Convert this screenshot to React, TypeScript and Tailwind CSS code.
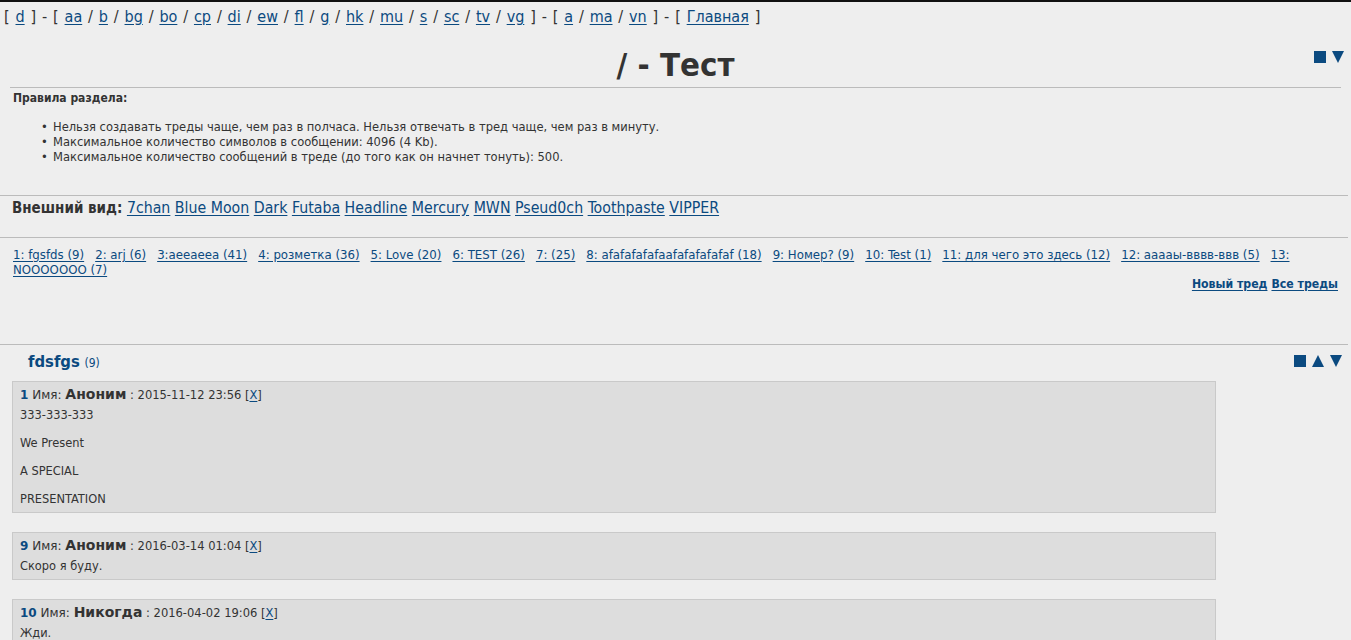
import React from 'react';

const boards1 = ['aa', 'b', 'bg', 'bo', 'cp', 'di', 'ew', 'fl', 'g', 'hk', 'mu', 's', 'sc', 'tv', 'vg'];
const boards2 = ['a', 'ma', 'vn'];
const styles = ['7chan', 'Blue Moon', 'Dark', 'Futaba', 'Headline', 'Mercury', 'MWN', 'Pseud0ch', 'Toothpaste', 'VIPPER'];
const threads = [
  '1: fgsfds (9)',
  '2: arj (6)',
  '3:aeeaeea (41)',
  '4: розметка (36)',
  '5: Love (20)',
  '6: TEST (26)',
  '7: (25)',
  '8: afafafafafaafafafafafaf (18)',
  '9: Номер? (9)',
  '10: Test (1)',
  '11: для чего это здесь (12)',
  '12: ааааы-вввв-ввв (5)',
  '13: NOOOOOOO (7)',
];
const rules = [
  'Нельзя создавать треды чаще, чем раз в полчаса. Нельзя отвечать в тред чаще, чем раз в минуту.',
  'Максимальное количество символов в сообщении: 4096 (4 Kb).',
  'Максимальное количество сообщений в треде (до того как он начнет тонуть): 500.',
];

interface Post {
  num: number;
  name: string;
  date: string;
  lines: string[];
}

const posts: Post[] = [
  { num: 1, name: 'Аноним', date: '2015-11-12 23:56', lines: ['333-333-333', 'We Present', 'A SPECIAL', 'PRESENTATION'] },
  { num: 9, name: 'Аноним', date: '2016-03-14 01:04', lines: ['Скоро я буду.'] },
  { num: 10, name: 'Никогда', date: '2016-04-02 19:06', lines: ['Жди.'] },
];

const link = 'text-[#0b4a80] underline underline-offset-2';

function Square() {
  return <span className="inline-block w-[12px] h-[12px] bg-[#0b4a80]" />;
}

function Down() {
  return (
    <svg width="12" height="12" viewBox="0 0 12 12">
      <polygon points="0,0 12,0 6,12" fill="#0b4a80" />
    </svg>
  );
}

function Up() {
  return (
    <svg width="12" height="12" viewBox="0 0 12 12">
      <polygon points="0,12 12,12 6,0" fill="#0b4a80" />
    </svg>
  );
}

export default function App() {
  return (
    <div className="min-h-[640px] bg-[#eeeeee] text-[#333] border-t-2 border-[#111] font-['DejaVu_Sans_Condensed','Liberation_Sans',sans-serif]">
      {/* top nav */}
      <div className="px-[4px] pt-[5px] text-[16px] leading-[20px] [word-spacing:1.3px] whitespace-nowrap">
        [ <a className={link}>d</a> ] - [{' '}
        {boards1.map((b, i) => (
          <React.Fragment key={b}>
            <a className={link}>{b}</a>
            {i < boards1.length - 1 ? ' / ' : ' '}
          </React.Fragment>
        ))}
        ] - [{' '}
        {boards2.map((b, i) => (
          <React.Fragment key={b}>
            <a className={link}>{b}</a>
            {i < boards2.length - 1 ? ' / ' : ' '}
          </React.Fragment>
        ))}
        ] - [ <a className={link}>Главная</a> ]
      </div>

      {/* board title */}
      <div className="relative mx-[10px] mt-[18px] pb-[2px] border-b border-[#bbb]">
        <h1 className="text-center text-[32.7px] leading-[40px] font-bold text-[#333]">/ - Тест</h1>
        <div className="absolute right-[-3px] top-[6px] flex items-center gap-[6px]">
          <Square />
          <Down />
        </div>
      </div>

      {/* rules */}
      <div className="mr-[3px] pl-[13px] pt-[3px] pb-[31px] leading-[15px] border-b border-[#bbb]">
        <div className="font-bold text-[12px]">Правила раздела:</div>
        <ul className="mt-[13px] pl-[28px] text-[12.8px]">
          {rules.map((r) => (
            <li key={r} className="flex">
              <span className="w-[12px] shrink-0">•</span>
              <span>{r}</span>
            </li>
          ))}
        </ul>
      </div>

      {/* styles */}
      <div className="mr-[3px] pl-[12px] pt-[2px] pb-[19px] leading-[20px] border-b border-[#bbb]">
        <span className="font-bold text-[15px]">Внешний вид:</span>{' '}
        <span className="text-[15.75px]">
          {styles.map((s) => (
            <React.Fragment key={s}>
              <a className={link}>{s}</a>{' '}
            </React.Fragment>
          ))}
        </span>
      </div>

      {/* thread list */}
      <div className="pl-[13px] pr-[13px] pt-[9px] leading-[15px]">
        <div className="text-[13.1px]">
          {threads.map((t) => (
            <a key={t} className={`${link} mr-[11px]`}>{t}</a>
          ))}
        </div>
        <div className="flex justify-end gap-[4px] font-bold text-[12.2px]">
          <a className={link}>Новый тред</a>
          <a className={link}>Все треды</a>
        </div>
      </div>

      {/* thread */}
      <div className="mt-[52px] mr-[3px] border-t border-[#bbb]">
        <div className="flex items-center justify-between pl-[28px] pr-[6px] pt-[5px]">
          <div className="text-[#0b4a80] leading-[24px]">
            <span className="text-[16.5px] font-bold">fdsfgs</span>{' '}
            <span className="text-[12px]">(9)</span>
          </div>
          <div className="flex items-center gap-[6px] mb-[3px]">
            <Square />
            <Up />
            <Down />
          </div>
        </div>

        <div className="flex flex-col gap-[19px] pl-[12px] pt-[6px] w-[1216px]">
          {posts.map((p) => (
            <div key={p.num} className="bg-[#dddddd] border border-[#c9c9c9] px-[7px] pt-[3px] pb-[6px]">
              <div className="text-[12px] leading-[18px] font-['DejaVu_Sans','Liberation_Sans',sans-serif]">
                <span className="font-bold text-[#0b4a80]">{p.num}</span>{' '}
                <span>Имя:</span>{' '}
                <span className="font-bold text-[14px]">{p.name}</span>
                <span className="font-['DejaVu_Sans_Condensed','Liberation_Sans',sans-serif] text-[12.8px]">
                  {' '}: {p.date} [<a className={link}>X</a>]
                </span>
              </div>
              <div className="text-[12.7px] leading-[15px]">
                {p.lines.map((l, i) => (
                  <p key={i} className={i === 0 ? 'mt-[3px]' : 'mt-[13px]'}>{l}</p>
                ))}
              </div>
            </div>
          ))}
        </div>
      </div>
    </div>
  );
}
